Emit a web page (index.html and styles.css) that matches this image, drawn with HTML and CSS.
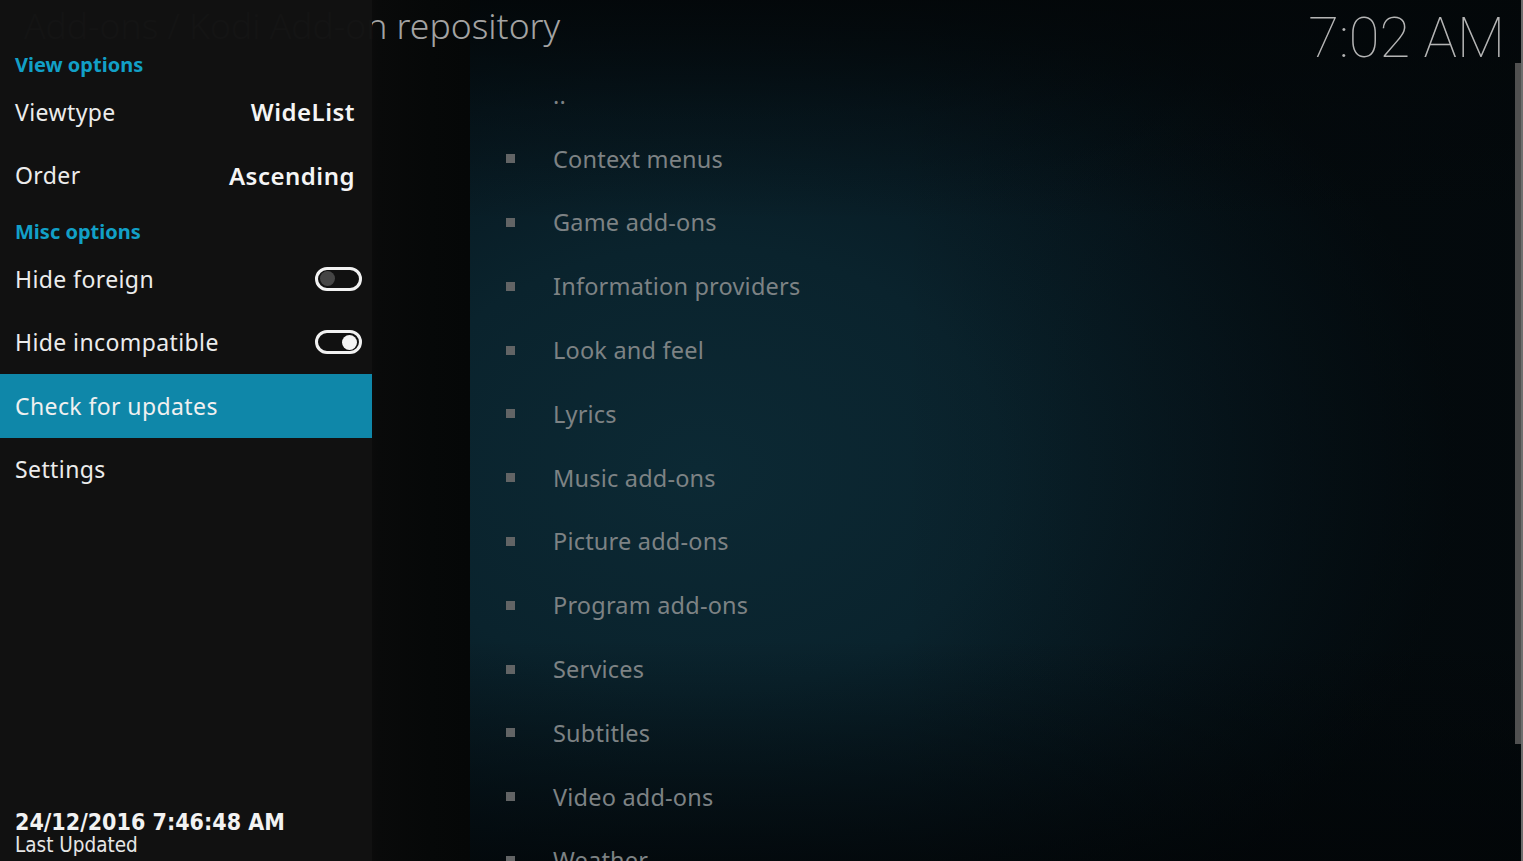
FILE: index.html
```html
<!DOCTYPE html>
<html lang="en">
<head>
<meta charset="utf-8">
<title>Add-ons / Kodi Add-on repository</title>
<link rel="stylesheet" href="styles.css">
</head>
<body>
<div class="screen">
  <div class="leftpanel"></div>
  <header class="topbar">
    <h1 class="title">Add-ons / Kodi Add-on repository</h1>
    <div class="clock">7:02 AM</div>
  </header>
  <ul class="list">
    <li class="item"><span class="bullet blank"></span><span class="label">..</span></li>
    <li class="item"><span class="bullet"></span><span class="label">Context menus</span></li>
    <li class="item"><span class="bullet"></span><span class="label">Game add-ons</span></li>
    <li class="item"><span class="bullet"></span><span class="label">Information providers</span></li>
    <li class="item"><span class="bullet"></span><span class="label">Look and feel</span></li>
    <li class="item"><span class="bullet"></span><span class="label">Lyrics</span></li>
    <li class="item"><span class="bullet"></span><span class="label">Music add-ons</span></li>
    <li class="item"><span class="bullet"></span><span class="label">Picture add-ons</span></li>
    <li class="item"><span class="bullet"></span><span class="label">Program add-ons</span></li>
    <li class="item"><span class="bullet"></span><span class="label">Services</span></li>
    <li class="item"><span class="bullet"></span><span class="label">Subtitles</span></li>
    <li class="item"><span class="bullet"></span><span class="label">Video add-ons</span></li>
    <li class="item"><span class="bullet"></span><span class="label">Weather</span></li>
  </ul>
  <div class="scrollbar"><div class="thumb"></div><div class="edge"></div></div>

  <aside class="sidebar">
    <div class="group-title">View options</div>
    <div class="row"><span>Viewtype</span><span class="value">WideList</span></div>
    <div class="row"><span>Order</span><span class="value">Ascending</span></div>
    <div class="group-title">Misc options</div>
    <div class="row"><span>Hide foreign</span><span class="toggle"><span class="knob"></span></span></div>
    <div class="row"><span>Hide incompatible</span><span class="toggle on"><span class="knob"></span></span></div>
    <div class="row focused"><span>Check for updates</span></div>
    <div class="row"><span>Settings</span></div>
    <div class="footer">
      <div class="date">24/12/2016 7:46:48 AM</div>
      <div class="date-label">Last Updated</div>
    </div>
  </aside>
</div>
</body>
</html>
```

FILE: styles.css
```css
* { box-sizing: border-box; margin: 0; padding: 0; }

html, body {
  width: 1523px;
  height: 861px;
  overflow: hidden;
  background: #000;
}

body {
  font-family: "Noto Sans", "Open Sans", sans-serif;
}

.screen {
  position: relative;
  width: 1523px;
  height: 861px;
  overflow: hidden;
  display: grid;
  grid-template-columns: 470px 1fr 8px;
  grid-template-rows: 63px 1fr;
  background:
    linear-gradient(180deg, rgba(3,7,9,0.92) 0px, rgba(3,7,9,0.35) 110px, rgba(3,7,9,0) 220px, rgba(3,7,9,0) 640px, rgba(2,5,7,0.75) 861px),
    linear-gradient(90deg, rgba(3,7,9,0) 0px, rgba(3,7,9,0) 900px, rgba(3,7,9,0.55) 1523px),
    radial-gradient(ellipse 760px 560px at 700px 470px, #0c2934 0%, #0a232d 40%, #071820 70%, #040c10 100%),
    #040c10;
}

.leftpanel {
  grid-column: 1;
  grid-row: 1 / 3;
  background: linear-gradient(90deg, #0c0c0c 0px, #0b0b0b 372px, #090a0a 378px, #060808 430px, #050707 470px);
}

.topbar {
  grid-column: 1 / 3;
  grid-row: 1;
  display: flex;
  justify-content: space-between;
  align-items: flex-start;
}

.title {
  padding: 4px 0 0 24px;
  font-size: 35.5px;
  font-weight: 300;
  line-height: 1.2;
  color: #a3a3a3;
  white-space: nowrap;
}

.clock {
  padding: 10px 0 0 0;
  margin-right: 10px;
  font-family: "Roboto", "Lato", sans-serif;
  font-weight: 100;
  font-size: 56px;
  line-height: 1;
  color: #b5b5b5;
  white-space: nowrap;
}

.list {
  grid-column: 2;
  grid-row: 2;
  list-style: none;
  overflow: hidden;
}

.item {
  height: 63.8px;
  display: flex;
  align-items: center;
  padding-left: 36px;
  gap: 38px;
  font-size: 23.5px;
  letter-spacing: 0.2px;
  color: #7d8284;
  white-space: nowrap;
}

.bullet {
  width: 9px;
  height: 9px;
  flex: none;
  background: #626465;
}

.bullet.blank { background: transparent; }

.scrollbar {
  grid-column: 3;
  grid-row: 1 / 3;
  display: flex;
  justify-content: flex-end;
}

.thumb {
  width: 6px;
  margin-top: 63px;
  height: 681px;
  background: #505050;
}

.edge {
  width: 2px;
  background: #6e6e6e;
}

/* slide-out options menu, overlaying the content */
.sidebar {
  position: absolute;
  left: 0;
  top: 0;
  bottom: 0;
  width: 372px;
  background: rgba(17, 17, 17, 0.985);
  display: flex;
  flex-direction: column;
  padding-top: 40px;
  color: #ececec;
}

.group-title {
  height: 40px;
  flex: none;
  display: flex;
  align-items: flex-end;
  padding: 0 0 3px 15px;
  font-size: 20px;
  font-weight: 700;
  line-height: 24px;
  color: #12a0c7;
}

.row {
  height: 63.5px;
  flex: none;
  display: flex;
  align-items: center;
  justify-content: space-between;
  padding: 0 10px 0 15px;
  font-size: 23px;
  letter-spacing: 0.4px;
  white-space: nowrap;
}

.value {
  font-weight: 600;
  font-size: 24px;
  letter-spacing: 0.5px;
  padding-right: 7px;
  color: #f5f5f5;
}

.row.focused {
  background: #0f87a9;
  color: #f0f0f0;
}

.toggle {
  width: 47px;
  height: 24px;
  border: 3px solid #f2f2f2;
  border-radius: 12px;
  display: flex;
  align-items: center;
  padding: 0 2px;
}

.knob {
  width: 15px;
  height: 15px;
  border-radius: 50%;
  background: #454545;
}

.toggle.on { justify-content: flex-end; }
.toggle.on .knob { background: #f4f4f4; }

.footer {
  margin-top: auto;
  padding: 0 15px 4px;
  font-family: "DejaVu Sans Condensed", "DejaVu Sans", sans-serif;
  font-stretch: condensed;
  color: #f2f2f2;
  white-space: nowrap;
}

.date {
  font-size: 23px;
  line-height: 23px;
  font-weight: 700;
}

.date-label {
  font-size: 20.5px;
  line-height: 23px;
  color: #e6e6e6;
}
```
